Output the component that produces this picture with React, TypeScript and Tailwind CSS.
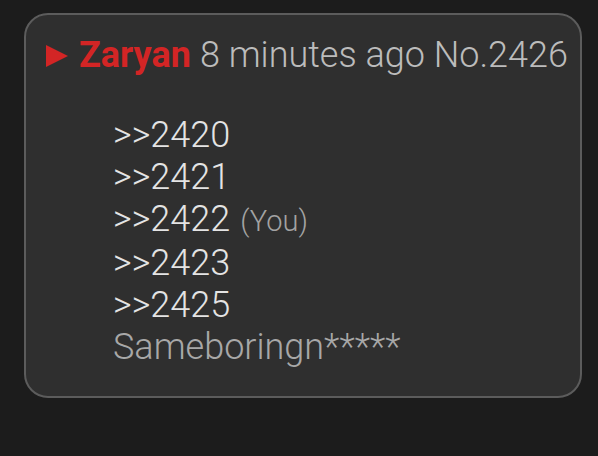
export default function App() {
  const refs = ["2420", "2421", "2422", "2423", "2425"];
  return (
    <div
      className="w-[598px] h-[456px] bg-[#1c1c1c] pt-[13px] pl-[24px] overflow-hidden"
      style={{ fontFamily: 'Roboto, "Noto Sans", sans-serif' }}
    >
      <div className="w-[558px] h-[385px] rounded-[24px] border-2 border-[#5c5c5c] bg-[#2f2f2f] pl-[19px] pt-[18px]">
        <div className="flex items-center text-[36px] leading-[44px] font-light text-[#bcbcbc] whitespace-nowrap">
          <svg width="24" height="24" viewBox="0 0 24 24" className="mr-[10px] mt-[1px]">
            <path d="M1 1 L23 12 L1 23 Z" fill="#d32525" />
          </svg>
          <span className="text-[#d32525] font-bold mr-[9px]">Zaryan</span>
          <span>8 minutes ago No.2426</span>
        </div>
        <div className="pl-[68px] pt-[37px] text-[36px] leading-[42px] font-light text-[#e4e4e4]">
          {refs.map((r) => (
            <div key={r} className="flex items-baseline">
              <span>&gt;&gt;{r}</span>
              {r === "2422" && (
                <span className="ml-[10px] text-[29px] text-[#a3a3a3]">(You)</span>
              )}
            </div>
          ))}
          <div className="text-[#a8a8a8]">Sameboringn*****</div>
        </div>
      </div>
    </div>
  );
}
